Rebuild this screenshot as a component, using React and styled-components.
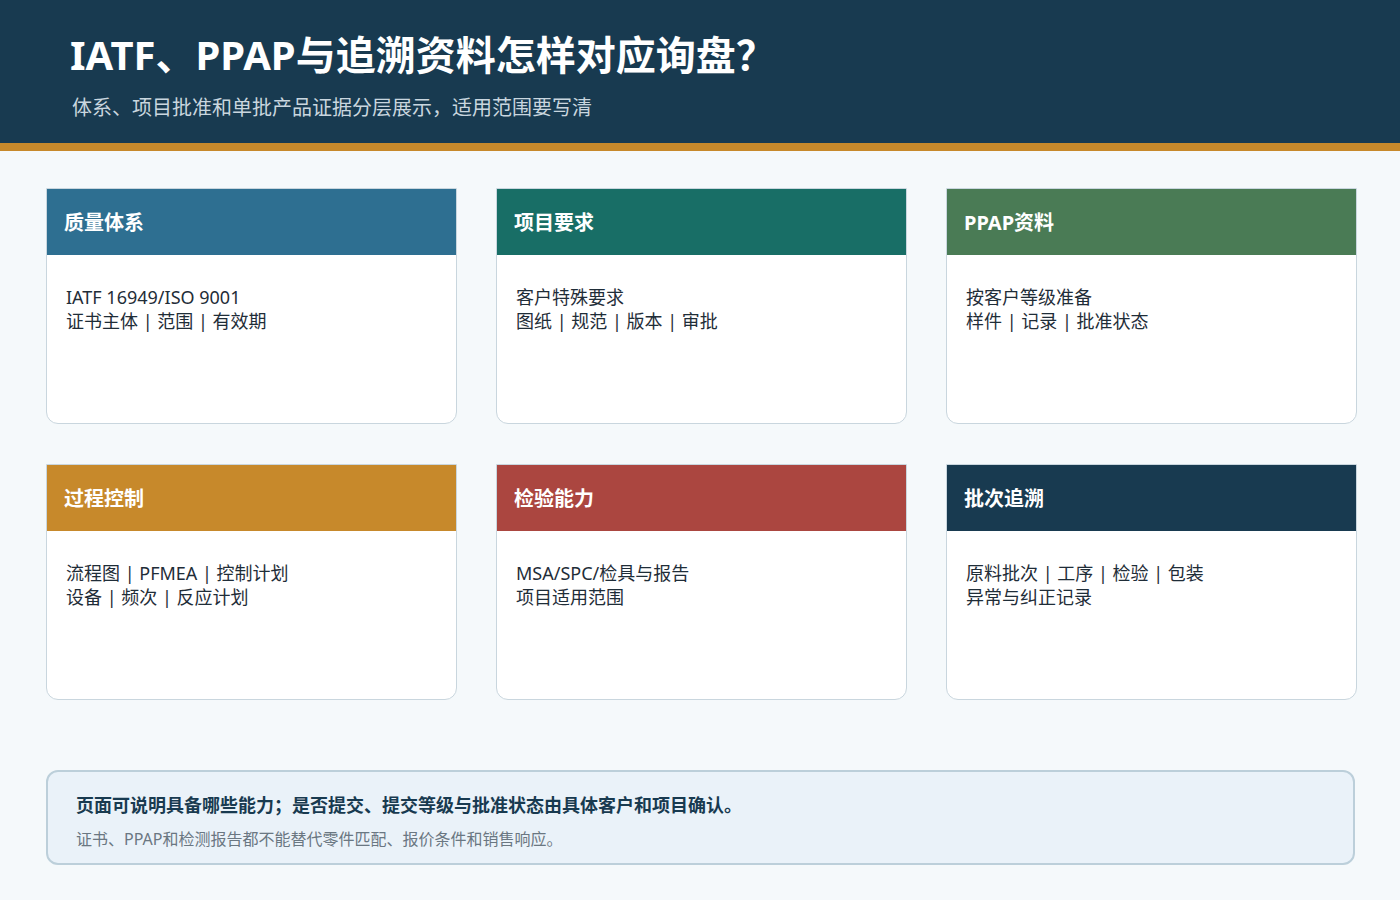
import React from 'react';
import styled, { createGlobalStyle } from 'styled-components';

const Global = createGlobalStyle`
  body { margin: 0; background: #f5f9fb; font-family: "Noto Sans", "Noto Sans CJK SC", sans-serif; }
`;

const Header = styled.header`
  background: #183a50;
  height: 143px;
  padding: 0 70px;
  box-sizing: border-box;
  border-bottom: 8px solid #c7892b;
  height: 151px;
  display: flex;
  flex-direction: column;
  padding-top: 28px;
`;

const Title = styled.h1`
  margin: 0;
  color: #fff;
  font-size: 40px;
  line-height: 54px;
  font-weight: 700;
`;

const Subtitle = styled.p`
  margin: 12px 0 0 2px;
  color: #c9d6df;
  font-size: 20px;
  line-height: 28px;
`;

const Main = styled.main`
  padding: 37px 45px 0 46px;
`;

const Grid = styled.div`
  display: grid;
  grid-template-columns: repeat(3, 411px);
  column-gap: 39px;
  row-gap: 40px;
`;

const Card = styled.section`
  background: #fff;
  height: 236px;
  border: 1px solid #c9d6de;
  border-radius: 0 0 12px 12px;
  overflow: hidden;
  box-sizing: border-box;
`;

const CardHead = styled.div`
  background: ${p => p.$color};
  height: 67px;
  margin: -1px -1px 0;
  padding: 0 18px;
  display: flex;
  align-items: center;
  color: #fff;
  font-size: 20px;
  font-weight: 700;
`;

const CardBody = styled.div`
  padding: 30px 19px;
  color: #1f2d38;
  font-size: 18px;
  line-height: 24px;
`;

const Note = styled.div`
  margin-top: 70px;
  width: 1309px;
  box-sizing: border-box;
  background: #eaf2f9;
  border: 2px solid #bccfda;
  border-radius: 12px;
  padding: 20px 28px 12px;
`;

const NoteStrong = styled.div`
  color: #183a50;
  font-size: 18px;
  font-weight: 700;
  line-height: 26px;
`;

const NoteText = styled.div`
  margin-top: 9px;
  color: #6a7782;
  font-size: 16px;
  line-height: 24px;
`;

const cards = [
  ['质量体系', '#2e6f91', 'IATF 16949/ISO 9001', '证书主体 | 范围 | 有效期'],
  ['项目要求', '#186e66', '客户特殊要求', '图纸 | 规范 | 版本 | 审批'],
  ['PPAP资料', '#4a7b55', '按客户等级准备', '样件 | 记录 | 批准状态'],
  ['过程控制', '#c7892b', '流程图 | PFMEA | 控制计划', '设备 | 频次 | 反应计划'],
  ['检验能力', '#ab4640', 'MSA/SPC/检具与报告', '项目适用范围'],
  ['批次追溯', '#183a50', '原料批次 | 工序 | 检验 | 包装', '异常与纠正记录'],
];

export default function App() {
  return (
    <>
      <Global />
      <Header>
        <Title>IATF、PPAP与追溯资料怎样对应询盘？</Title>
        <Subtitle>体系、项目批准和单批产品证据分层展示，适用范围要写清</Subtitle>
      </Header>
      <Main>
        <Grid>
          {cards.map(([t, c, a, b]) => (
            <Card key={t}>
              <CardHead $color={c}>{t}</CardHead>
              <CardBody>{a}<br />{b}</CardBody>
            </Card>
          ))}
        </Grid>
        <Note>
          <NoteStrong>页面可说明具备哪些能力；是否提交、提交等级与批准状态由具体客户和项目确认。</NoteStrong>
          <NoteText>证书、PPAP和检测报告都不能替代零件匹配、报价条件和销售响应。</NoteText>
        </Note>
      </Main>
    </>
  );
}
